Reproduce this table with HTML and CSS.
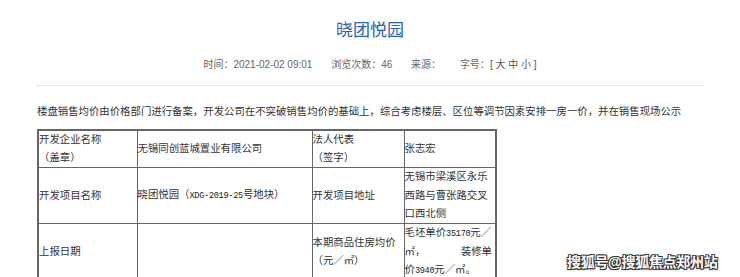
FILE: index.html
```html
<!DOCTYPE html>
<html lang="zh-CN">
<head>
<meta charset="UTF-8">
<meta name="viewport" content="width=device-width, initial-scale=1.0">
<title>晓团悦园</title>
<link rel="stylesheet" href="styles.css">
</head>
<body>
    <div class="page">
        <h1 class="title">晓团悦园</h1>
        <div class="meta">
            <span class="meta-item">时间：2021-02-02 09:01</span>
            <span class="meta-item">浏览次数：46</span>
            <span class="meta-item">来源：</span>
            <span class="meta-item">字号：<span class="size">[ 大 中 小 ]</span></span>
        </div>
        <div class="line"></div>

        <!-- 본문 -->
        <p class="intro">楼盘销售均价由价格部门进行备案，开发公司在不突破销售均价的基础上，综合考虑楼层、区位等调节因素安排一房一价，并在销售现场公示</p>

        <table class="info">
            <colgroup>
                <col class="c1">
                <col class="c2">
                <col class="c3">
                <col class="c4">
            </colgroup>
            <tr>
                <td>开发企业名称<br>（盖章）</td>
                <td>无锡同创蓝城置业有限公司</td>
                <td>法人代表<br>（签字）</td>
                <td>张志宏</td>
            </tr>
            <tr>
                <td>开发项目名称</td>
                <td>晓团悦园（<span class="num">XDG-2019-25</span>号地块）</td>
                <td>开发项目地址</td>
                <td>无锡市梁溪区永乐西路与曹张路交叉口西北侧</td>
            </tr>
            <tr>
                <td>上报日期</td>
                <td></td>
                <td>本期商品住房均价<br>（元／㎡）</td>
                <td>
                    <span class="ln">毛坯单价<span class="num">35170</span>元／</span>
                    <span class="ln ln-just"><span>㎡，</span><span>装修单</span></span>
                    <span class="ln">价<span class="num">3940</span>元／㎡。</span>
                </td>
            </tr>
        </table>
    </div>
    <div class="mark">搜狐号@搜狐焦点郑州站</div>
</body>
</html>
```

FILE: styles.css
```css
body{
    margin: 0;
    font-family: "Liberation Sans", "Noto Sans CJK SC", sans-serif;
    color: #333;
    background: #fff;
}
.page{
    width: 666px;
    margin: 0 auto;
}
/* 제목 */
.title{
    margin: 0;
    padding-top: 19px;
    font-size: 17px;
    font-weight: normal;
    line-height: 24px;
    color: #2a62b4;
    text-align: center;
}
.meta{
    margin-top: 15px;
    font-size: 10px;
    line-height: 14px;
    color: #666;
    text-align: center;
}
.meta-item{
    margin: 0 8px;
}
.size{
    color: #555;
}
.line{
    margin-top: 13px;
    border-bottom: 1px dotted #d4d4d4;
}
.intro{
    margin: 18px 0 0;
    font-size: 10.4px;
    line-height: 16px;
    color: #333;
}
/* 표 */
.info{
    margin-top: 9px;
    border-collapse: collapse;
    border: 2px solid #666;
    font-size: 10.4px;
    line-height: 18.2px;
    color: #333;
}
.info td{
    border: 1px solid #666;
    padding: 0;
    vertical-align: middle;
    text-align: left;
}
.c1{ width: 99px; }
.c2{ width: 175px; }
.c3{ width: 92px; }
.c4{ width: 92px; }
.num{
    font-family: "Liberation Mono", monospace;
    font-size: 8.6px;
    letter-spacing: -0.3px;
    color: #222;
}
.ln{
    display: block;
    white-space: nowrap;
}
.ln-just{
    display: flex;
    justify-content: space-between;
    padding-right: 3px;
}
/* 워터마크 */
.mark{
    position: absolute;
    left: 567px;
    top: 252px;
    font-size: 14px;
    font-weight: bold;
    line-height: 20px;
    color: #fff;
    letter-spacing: -0.3px;
    text-shadow: 1px 1px 0 #333, -1px -1px 0 #333, 1px -1px 0 #333, -1px 1px 0 #333, 0 1px 1px #222;
}
```
